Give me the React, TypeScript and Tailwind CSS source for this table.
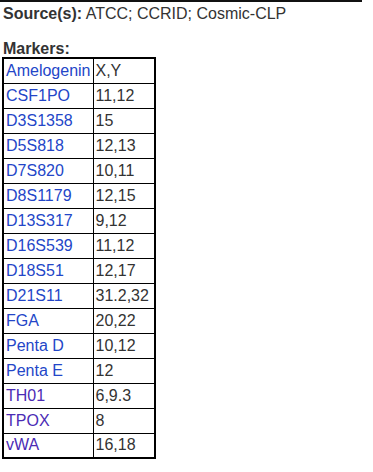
const markers: [string, string, boolean?][] = [
  ['Amelogenin', 'X,Y'],
  ['CSF1PO', '11,12'],
  ['D3S1358', '15'],
  ['D5S818', '12,13'],
  ['D7S820', '10,11'],
  ['D8S1179', '12,15'],
  ['D13S317', '9,12'],
  ['D16S539', '11,12'],
  ['D18S51', '12,17'],
  ['D21S11', '31.2,32'],
  ['FGA', '20,22'],
  ['Penta D', '10,12'],
  ['Penta E', '12'],
  ['TH01', '6,9.3', true],
  ['TPOX', '8', true],
  ['vWA', '16,18', true],
]

export default function App() {
  return (
    <div className="w-[373px] h-[472px] bg-white text-[16px] text-[#333] font-['Liberation_Sans',Arial,sans-serif] overflow-hidden">
      <div className="w-[362px] border-t-2 border-[#111]" />
      <div className="pl-[3px] pt-[3px] leading-[18px]">
        <b>Source(s):</b> ATCC; CCRID; Cosmic-CLP
      </div>
      <div className="pl-[3px] pt-[17px] leading-[18px] font-bold">Markers:</div>
      <table className="ml-[2px] -mt-[1px] border-collapse border-2 border-black">
        <tbody>
          {markers.map(([name, value, visited]) => (
            <tr key={name} className="h-[25px]">
              <td className="border border-black pl-[2px] pr-[2px] leading-[18px]">
                <a className={visited ? 'text-[#4b2bb5]' : 'text-[#2346c8]'}>{name}</a>
              </td>
              <td className="border border-black pl-[2px] pr-[2px] leading-[18px] w-[62px]">{value}</td>
            </tr>
          ))}
        </tbody>
      </table>
    </div>
  )
}
